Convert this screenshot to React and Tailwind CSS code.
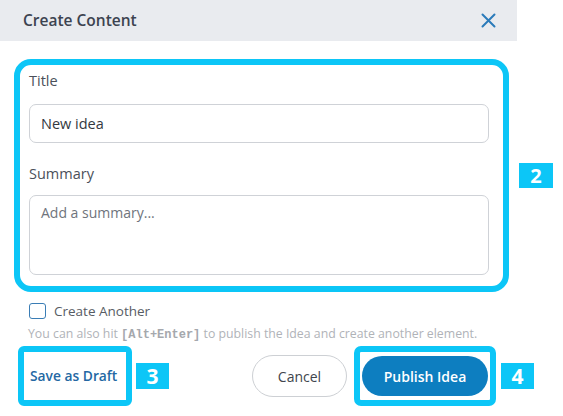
import React from "react";

export default function App() {
  return (
    <div className="w-[563px] h-[416px] bg-white overflow-hidden font-['Open_Sans',sans-serif]">
      <div className="w-[517px] h-[41px] bg-[#e9ebef] flex items-center justify-between pl-[23px] pr-[21px]">
        <span className="text-[15.5px] font-semibold text-[#3c4350]">Create Content</span>
        <svg width="15" height="15" viewBox="0 0 15 15" fill="none" stroke="#2b7bba" strokeWidth="2" strokeLinecap="round">
          <path d="M1.5 1.5 L13.5 13.5 M13.5 1.5 L1.5 13.5" />
        </svg>
      </div>

      <div className="flex items-center mt-[18px] ml-[14px]">
        <div className="w-[495px] h-[233px] border-[6px] border-[#0cc6f7] rounded-[17px] pl-[9px] pt-[5px]">
          <div className="text-[14.5px] text-[#4b505a] leading-[22px]">Title</div>
          <div className="mt-[12px] w-[460px] h-[39px] border border-[#cfd2d7] rounded-[7px] flex items-center px-[11px] text-[14.5px] text-[#333840]">
            New idea
          </div>
          <div className="mt-[20px] text-[14.5px] text-[#4b505a] leading-[22px]">Summary</div>
          <div className="mt-[10px] w-[460px] h-[80px] border border-[#cfd2d7] rounded-[7px] px-[11px] pt-[6px] text-[14px] text-[#6f747c]">
            Add a summary...
          </div>
        </div>
        <div className="ml-[10px] w-[34px] h-[25px] bg-[#0cc6f7] flex items-center justify-center text-white font-bold text-[20px] leading-none">
          2
        </div>
      </div>

      <div className="flex items-center mt-[9px] ml-[29px]">
        <div className="w-[17px] h-[16px] border-[1.5px] border-[#3a7db5] rounded-[3px]"></div>
        <span className="ml-[8px] text-[13.5px] text-[#575c64]">Create Another</span>
      </div>

      <div className="mt-[5px] ml-[28px] text-[12.3px] text-[#b0b3b8] leading-[16px] whitespace-nowrap">
        You can also hit{" "}
        <span className="font-['Liberation_Mono',monospace] font-bold text-[#a5a8ad] text-[12px]">[Alt+Enter]</span>{" "}
        to publish the Idea and create another element.
      </div>

      <div className="flex items-center mt-[3px] ml-[18px]">
        <div className="w-[114px] h-[60px] border-[6px] border-[#0cc6f7] rounded-[6px] flex items-center pl-[6px]">
          <span className="text-[13.8px] font-semibold text-[#2468a3] whitespace-nowrap">Save as Draft</span>
        </div>
        <div className="ml-[4px] w-[33px] h-[26px] bg-[#0cc6f7] flex items-center justify-center text-white font-bold text-[21px] leading-none">
          3
        </div>
        <div className="ml-[83px] w-[95px] h-[42px] border border-[#cdd0d4] rounded-full flex items-center justify-center text-[14px] font-medium text-[#40454d]">
          Cancel
        </div>
        <div className="ml-[7px] w-[142px] h-[60px] border-[6px] border-[#0cc6f7] rounded-[7px] flex items-center pl-[2px]">
          <div className="w-[126px] h-[40px] bg-[#0d7ec0] rounded-full flex items-center justify-center text-white text-[14px] font-semibold">
            Publish Idea
          </div>
        </div>
        <div className="ml-[5px] w-[33px] h-[26px] bg-[#0cc6f7] flex items-center justify-center text-white font-bold text-[21px] leading-none">
          4
        </div>
      </div>
    </div>
  );
}
